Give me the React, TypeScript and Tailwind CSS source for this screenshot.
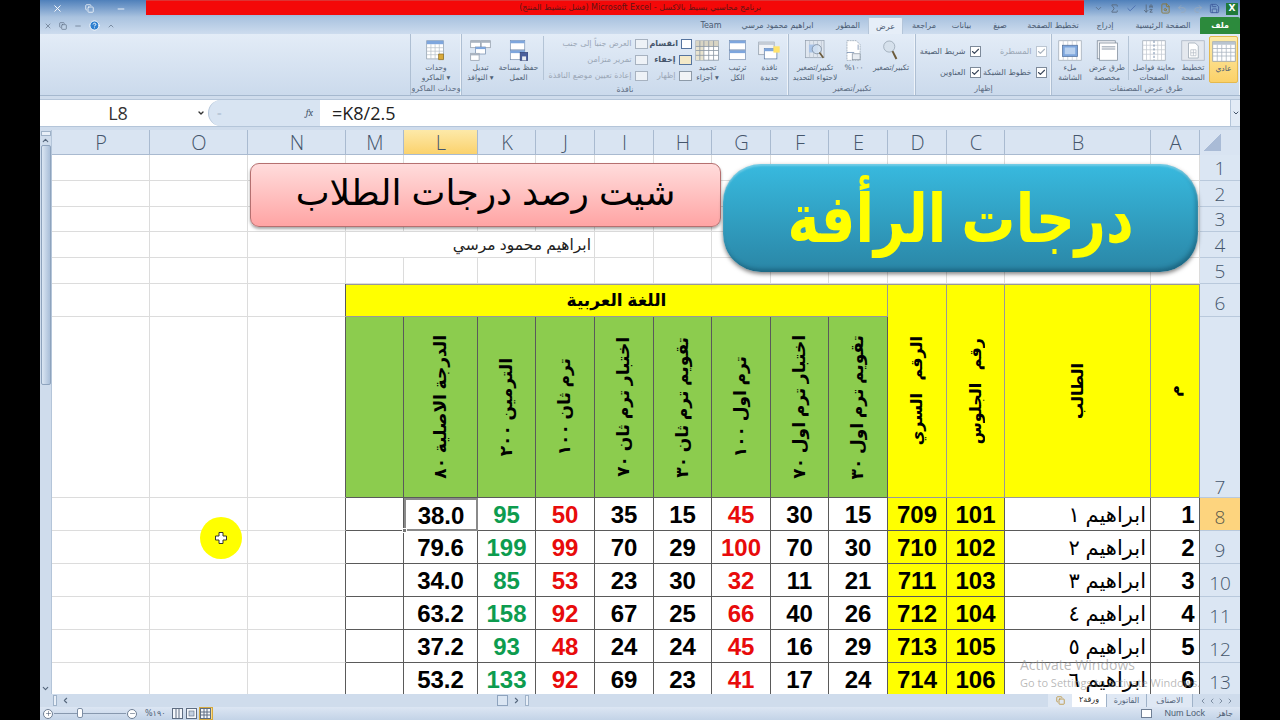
import React from 'react';
import { ArrowDownAZ, Check, ChevronDown, ChevronLeft, ChevronRight, ChevronUp, Minus, Plus, Sigma, Undo2, Redo2, Save, FileSearch, Copy, X, HelpCircle } from 'lucide-react';

const ui = "[font-family:'DejaVu_Sans',sans-serif]";

const SheetIcon = ({ fill = '#fff' }: { fill?: string }) => (
  <svg width={32} height={28} viewBox="0 0 32 28">
    <rect x="1" y="1" width="30" height="26" fill={fill} stroke="#8d9aa8" />
    <rect x="1" y="1" width="30" height="4" fill="#b9c4d0" />
    {[6, 12, 18, 24].map((x) => <path key={x} d={`M${x + 1} 5V27`} stroke="#a7b2be" />)}
    {[10, 15, 20].map((y) => <path key={y} d={`M1 ${y}H31`} stroke="#a7b2be" />)}
  </svg>
);

const PageIcon = () => (
  <svg width="32" height="28" viewBox="0 0 32 28">
    <rect x="1" y="1" width="30" height="26" fill="#e4e8ee" stroke="#a8b2bf" />
    <path d="M10 4h9l4 4v16H10z" fill="#fff" stroke="#9aa5b1" />
    <path d="M13 13h7v8h-7zM16.500 13v8M13 17h7" stroke="#b5bdc7" fill="none" />
  </svg>
);

const BreakIcon = () => (
  <svg width="32" height="28" viewBox="0 0 32 28">
    <rect x="1" y="1" width="30" height="26" fill="#fff" stroke="#a0aab5" />
    {[6, 11, 21, 26].map((x) => <path key={x} d={`M${x} 1V27`} stroke="#c3cad2" />)}
    {[7, 13, 19].map((y) => <path key={y} d={`M1 ${y}H31`} stroke="#c3cad2" />)}
    <path d="M16 1V27" stroke="#4e6b94" strokeDasharray="3 2" />
  </svg>
);

const CustomIcon = () => (
  <svg width="32" height="28" viewBox="0 0 32 28">
    <rect x="3" y="1" width="24" height="24" fill="#eef1f5" stroke="#7f8b99" />
    <rect x="6" y="4" width="24" height="23" fill="#fff" stroke="#7f8b99" />
    <path d="M9 9h18M9 12h18" stroke="#b4bcc6" strokeWidth="2" />
  </svg>
);

const FullIcon = () => (
  <svg width="32" height="28" viewBox="0 0 32 28">
    <rect x="1" y="1" width="30" height="26" fill="#fff" stroke="#a0aab5" />
    {[7, 13, 19, 25].map((x) => <path key={x} d={`M${x} 1V27`} stroke="#c3cad2" />)}
    <rect x="6" y="7" width="20" height="15" fill="#7ea6dd" stroke="#56749e" />
    <rect x="9" y="10" width="14" height="9" fill="#b9d1ef" />
  </svg>
);

const ZoomIcon = () => (
  <svg width="26" height="32" viewBox="0 0 26 32">
    <circle cx="11" cy="10" r="8.500" fill="#d6e1ec" stroke="#8b98a6" />
    <path d="M16 17l6 12" stroke="#6b5a3a" strokeWidth="3" />
  </svg>
);

const HundredIcon = () => (
  <svg width="26" height="32" viewBox="0 0 26 32">
    <path d="M3 1h14l6 6v24H3z" fill="#fff" stroke="#8d9aa8" strokeDasharray="3 1" />
    <rect x="11" y="21" width="12" height="9" fill="#e9edf2" stroke="#7f8b99" />
    <path d="M3 19h11M20 7v8" stroke="#56749e" />
  </svg>
);

const FitIcon = () => (
  <svg width="32" height="32" viewBox="0 0 32 32">
    <rect x="1" y="1" width="28" height="26" fill="#dfe6ef" stroke="#8d9aa8" />
    {[7, 13, 19, 25].map((x) => <path key={x} d={`M${x} 1V27`} stroke="#b4bec9" />)}
    <rect x="6" y="7" width="12" height="12" fill="#a9c3e6" />
    <circle cx="18" cy="14" r="7" fill="#d5e3f4" fillOpacity=".8" stroke="#6c7c8f" />
    <path d="M22 19l6 8" stroke="#6b5a3a" strokeWidth="2.500" />
  </svg>
);

const NewWinIcon = () => (
  <svg width="32" height="30" viewBox="0 0 32 30">
    <rect x="1" y="3" width="22" height="18" fill="#f1f3f6" stroke="#8a96a4" />
    <rect x="1" y="3" width="22" height="4" fill="#c4ccd6" />
    <rect x="9" y="12" width="18" height="15" fill="#fff" stroke="#56749e" />
    <rect x="9" y="12" width="18" height="4" fill="#7ea6dd" />
    <rect x="22" y="9" width="9" height="9" fill="#ffe36b" />
  </svg>
);

const ArrangeIcon = () => (
  <svg width="26" height="32" viewBox="0 0 26 32">
    <rect x="1" y="1" width="24" height="14" fill="#fff" stroke="#6f88aa" />
    <rect x="1" y="1" width="24" height="4" fill="#7ea6dd" />
    <rect x="1" y="16" width="24" height="14" fill="#fff" stroke="#6f88aa" />
    <rect x="1" y="16" width="24" height="4" fill="#7ea6dd" />
  </svg>
);

const FreezeIcon = () => (
  <svg width="30" height="26" viewBox="0 0 30 26">
    <rect x="1" y="1" width="28" height="24" fill="#fff" stroke="#8a96a4" />
    <rect x="1" y="1" width="10" height="24" fill="#e8e3cf" />
    <rect x="1" y="1" width="28" height="7" fill="#d9d5c4" />
    {[6, 11, 17, 23].map((x) => <path key={x} d={`M${x} 1V25`} stroke="#8a96a4" />)}
    {[8, 13, 19].map((y) => <path key={y} d={`M1 ${y}H29`} stroke="#8a96a4" />)}
  </svg>
);

const SaveAreaIcon = () => (
  <svg width="30" height="32" viewBox="0 0 30 32">
    <rect x="2" y="1" width="22" height="14" fill="#fff" stroke="#6f88aa" />
    <rect x="2" y="1" width="22" height="4" fill="#7ea6dd" />
    <rect x="2" y="16" width="22" height="14" fill="#fff" stroke="#6f88aa" />
    <rect x="2" y="16" width="22" height="4" fill="#7ea6dd" />
    <rect x="17" y="19" width="12" height="12" fill="#4a5f9c" stroke="#2f3f70" />
    <rect x="20" y="25" width="6" height="6" fill="#e9edf2" />
  </svg>
);

const SwitchIcon = () => (
  <svg width="30" height="30" viewBox="0 0 30 30">
    <rect x="1" y="1" width="14" height="10" fill="#fff" stroke="#8a96a4" />
    <rect x="1" y="1" width="14" height="3" fill="#aab4c0" />
    <rect x="16" y="1" width="13" height="10" fill="#fff" stroke="#8a96a4" />
    <rect x="16" y="1" width="13" height="3" fill="#aab4c0" />
    <rect x="8" y="10" width="14" height="10" fill="#fff" stroke="#6f88aa" />
    <rect x="8" y="10" width="14" height="3" fill="#7ea6dd" />
    <rect x="1" y="19" width="12" height="10" fill="#fff" stroke="#8a96a4" />
    <rect x="1" y="19" width="12" height="3" fill="#aab4c0" />
  </svg>
);

const MacroIcon = () => (
  <svg width="28" height="30" viewBox="0 0 28 30">
    <rect x="1" y="1" width="24" height="26" fill="#fff" stroke="#8d9aa8" />
    <rect x="1" y="1" width="24" height="5" fill="#7ea6dd" />
    {[7, 13, 19].map((x) => <path key={x} d={`M${x} 6V27`} stroke="#b4bec9" />)}
    {[11, 16, 21].map((y) => <path key={y} d={`M1 ${y}H25`} stroke="#b4bec9" />)}
    <path d="M18 20h7v8h-7z" fill="#d9a93a" stroke="#8a6b20" />
  </svg>
);

const ViewIcon = ({ kind }: { kind: 'layout' | 'page' | 'grid' }) => (
  <svg width="11" height="11" viewBox="0 0 11 11">
    <rect x=".5" y=".5" width="10" height="10" fill="#f4f7fb" stroke="#5e6d82" />
    {kind === 'layout' && <path d="M4 1v9M7 1v9" stroke="#5e6d82" />}
    {kind === 'page' && <rect x="3" y="3" width="5" height="5" fill="#c2cfdf" stroke="#5e6d82" strokeWidth=".6" />}
    {kind === 'grid' && <path d="M4 1v9M7 1v9M1 4h9M1 7h9" stroke="#5e6d82" />}
  </svg>
);

const Big = ({ w, lines, icon, active }: { w: number; lines: string[]; icon: React.ReactNode; active?: boolean }) => (
  <div
    style={{ width: w }}
    className={`flex h-[47px] shrink-0 flex-col items-center rounded-[2px] pt-[3px] ${active ? 'border border-[#e5b94d] bg-linear-to-b from-[#fdeba8] to-[#fbd168]' : ''}`}
  >
    <div className="flex h-[22px] items-center justify-center [&>svg]:h-[21px] [&>svg]:w-auto">{icon}</div>
    <div className="mt-[2px] text-center text-[7.5px] leading-[10px] whitespace-nowrap text-[#4f5f75]">
      {lines.map((l) => <div key={l}>{l}</div>)}
    </div>
  </div>
);

const Group = ({ w, label, children, gap = 'gap-1' }: { w: number; label: string; children: React.ReactNode; gap?: string }) => (
  <div style={{ width: w }} className="flex h-full shrink-0 flex-col border-l border-[#aebfd3] shadow-[inset_-1px_0_0_#eef3f9]">
    <div className={`flex h-[50px] justify-center pt-[2px] ${gap}`}>{children}</div>
    <div className="h-[12px] text-center text-[8px] leading-[11px] text-[#5d6d83]">{label}</div>
  </div>
);

const CheckRow = ({ label, dim }: { label: string; dim?: boolean }) => (
  <div className={`flex h-[21px] items-center justify-end gap-[4px] text-[8px] whitespace-nowrap ${dim ? 'text-[#9aa6b5]' : 'text-[#4f5f75]'}`}>
    <span>{label}</span>
    <span className={`flex h-[11px] w-[11px] shrink-0 items-center justify-center border bg-white ${dim ? 'border-[#bcc6d2]' : 'border-[#7d8a9a]'}`}>
      <Check size={9} strokeWidth={3} color={dim ? '#a9b3bf' : '#39465a'} />
    </span>
  </div>
);

const SmallRow = ({ label, dim, icon }: { label: string; dim?: boolean; icon: string }) => (
  <div className={`flex h-[16px] items-center justify-end gap-[3px] text-[8px] whitespace-nowrap ${dim ? 'text-[#9ba7b6]' : 'font-bold text-[#46566c]'}`}>
    <span>{label}</span>
    <span className={`h-[10px] w-[13px] border ${icon}`} />
  </div>
);

const tabs: [string, number][] = [
  ['Team', 32], ['ابراهيم محمود مرسي', 101], ['المطور', 40], ['عرض', 35], ['مراجعة', 42], ['بيانات', 33],
  ['صيغ', 44], ['تخطيط الصفحة', 62], ['إدراج', 42], ['الصفحة الرئيسية', 74],
];

const cols = ['P', 'O', 'N', 'M', 'L', 'K', 'J', 'I', 'H', 'G', 'F', 'E', 'D', 'C', 'B', 'A'];

const heads = [
  'الدرجة الاصلية ٨٠', 'الترمين ٢٠٠', 'ترم ثان ١٠٠', 'اختبار ترم ثان ٧٠',
  'تقويم ترم ثان ٣٠', 'ترم اول ١٠٠', 'اختبار ترم اول ٧٠', 'تقويم ترم اول ٣٠',
];

const rows = [
  ['38.0', '95', '50', '35', '15', '45', '30', '15', '709', '101', 'ابراهيم ١', '1', '8'],
  ['79.6', '199', '99', '70', '29', '100', '70', '30', '710', '102', 'ابراهيم ٢', '2', '9'],
  ['34.0', '85', '53', '23', '30', '32', '11', '21', '711', '103', 'ابراهيم ٣', '3', '10'],
  ['63.2', '158', '92', '67', '25', '66', '40', '26', '712', '104', 'ابراهيم ٤', '4', '11'],
  ['37.2', '93', '48', '24', '24', '45', '16', '29', '713', '105', 'ابراهيم ٥', '5', '12'],
  ['53.2', '133', '92', '69', '23', '41', '17', '24', '714', '106', 'ابراهيم ٦', '6', '13'],
];

const Blank = ({ className = '' }: { className?: string }) => <div className={`border-r border-b border-[#dcdcdc] ${className}`} />;

const RowNum = ({ n, on, className = 'items-center' }: { n: string; on?: boolean; className?: string }) => (
  <div className={`flex justify-center border-b border-[#b9c9dc] [font-family:'Open_Sans',sans-serif] text-[19px] leading-[20px] font-light ${on ? 'bg-[#fdd47e] text-[#5b5b4b]' : 'bg-[#dbe6f3] text-[#45566c]'} ${className}`}>
    {n}
  </div>
);

const line = 'border-r border-b border-[#5a5a5a]';

const numColor = (i: number) => {
  if (i === 1) return 'text-[#0d9c4f]';
  if (i === 2 || i === 5) return 'text-[#e80b0b]';
  return 'text-black';
};

const VertText = ({ t, size = 'text-[17px]' }: { t: string; size?: string }) => (
  <span dir="rtl" className={`rotate-180 font-bold whitespace-nowrap text-black [writing-mode:vertical-rl] ${size}`}>{t}</span>
);

export default function App() {
  return (
    <div className={`flex h-[720px] w-[1280px] justify-center overflow-hidden bg-black ${ui}`}>
      <div className="flex w-[1200px] flex-col bg-[#cfdcec]">
        {/* title bar + tabs */}
        <div className="h-[34px] bg-linear-to-b from-[#4f80ba] via-[#a9c2df] to-[#cddcee]">
          <div className="flex h-[17px]">
            <div className="flex w-[106px] items-center gap-[22px] pl-[12px] text-white">
              <X size={11} />
              <Copy size={9} />
              <Minus size={10} />
            </div>
            <div dir="rtl" className="flex h-[15px] w-[938px] items-center justify-center border-t border-[#d33] bg-[#f40808] pl-[50px] text-[8px] text-[#5e1414]">
              برنامج محاسبي بسيط بالاكسل - Microsoft Excel (فشل تنشيط المنتج)
            </div>
            <div className="flex flex-1 items-center justify-end gap-[6px] pr-[2px] text-[#5a6b80]">
              <ChevronDown size={9} />
              <Sigma size={11} />
              <Check size={11} color="#4a6fb0" />
              <ArrowDownAZ size={11} />
              <FileSearch size={11} color="#8a7a40" />
              <Undo2 size={10} color="#9ab" />
              <Redo2 size={10} color="#9ab" />
              <Save size={11} color="#3f5c9c" />
              <span className="flex h-[12px] w-[12px] items-center justify-center bg-[#1f7a3a] text-[9px] font-bold text-white">X</span>
            </div>
          </div>
          <div className="flex h-[17px] items-center">
            <div className="flex w-[80px] items-center gap-[7px] pl-[4px] text-[#5a6b80]">
              <X size={8} />
              <Copy size={8} />
              <Minus size={8} />
              <HelpCircle size={11} color="#fff" fill="#2f80d0" />
              <ChevronUp size={8} />
            </div>
            <div className="flex flex-1 justify-end">
              {tabs.map(([t, w]) => (
                <div
                  key={t}
                  style={{ width: w }}
                  className={`flex h-[17px] items-center justify-center pt-[1px] text-[8px] whitespace-nowrap text-[#4a5b72] ${t === 'عرض' ? 'rounded-t-[2px] border border-b-0 border-[#b4c5d9] bg-[#e6eef8]' : ''}`}
                >
                  {t}
                </div>
              ))}
              <div className="flex h-[17px] w-[40px] items-center justify-center rounded-t-[2px] bg-[#2c8a3c] text-[8px] font-bold text-white">ملف</div>
            </div>
          </div>
        </div>

        {/* ribbon */}
        <div className="flex h-[62px] justify-end border-b border-[#a5b8ce] bg-linear-to-b from-[#e3ecf7] to-[#cbdaec]">
          <Group w={51} label="وحدات الماكرو">
            <Big w={44} lines={['وحدات', 'الماكرو ▾']} icon={<MacroIcon />} />
          </Group>
          <Group w={327} label="نافذة" gap="gap-[2px]">
            <Big w={32} lines={['تبديل', 'النوافذ ▾']} icon={<SwitchIcon />} />
            <Big w={40} lines={['حفظ مساحة', 'العمل']} icon={<SaveAreaIcon />} />
            <div className="mx-[2px] h-[44px] w-px bg-[#b4c4d6]" />
            <div className="flex w-[100px] flex-col">
              <SmallRow dim label="العرض جنباً إلى جنب" icon="border-[#a7b2c0] bg-[#eef2f7]" />
              <SmallRow dim label="تمرير متزامن" icon="border-[#a7b2c0] bg-[#eef2f7]" />
              <SmallRow dim label="إعادة تعيين موضع النافذة" icon="border-[#a7b2c0] bg-[#eef2f7]" />
            </div>
            <div className="flex w-[42px] flex-col">
              <SmallRow label="انقسام" icon="border-[#56749e] bg-white" />
              <SmallRow label="إخفاء" icon="border-[#56749e] bg-[#f4e9c8]" />
              <SmallRow dim label="إظهار" icon="border-[#8d9aa8] bg-[#f1f3f6]" />
            </div>
            <Big w={28} lines={['تجميد', 'أجزاء ▾']} icon={<FreezeIcon />} />
            <Big w={28} lines={['ترتيب', 'الكل']} icon={<ArrangeIcon />} />
            <Big w={32} lines={['نافذة', 'جديدة']} icon={<NewWinIcon />} />
          </Group>
          <Group w={127} label="تكبير/تصغير" gap="gap-[4px]">
            <Big w={46} lines={['تكبير/تصغير', 'لاحتواء التحديد']} icon={<FitIcon />} />
            <Big w={24} lines={['%١٠٠']} icon={<HundredIcon />} />
            <Big w={42} lines={['تكبير/تصغير']} icon={<ZoomIcon />} />
          </Group>
          <Group w={136} label="إظهار">
            <div className="grid w-[126px] grid-cols-[60px_66px] pt-[5px]">
              <CheckRow label="شريط الصيغة" />
              <CheckRow dim label="المسطرة" />
              <CheckRow label="العناوين" />
              <CheckRow label="خطوط الشبكة" />
            </div>
          </Group>
          <Group w={189} label="طرق عرض المصنفات" gap="gap-[2px]">
            <Big w={32} lines={['ملء', 'الشاشة']} icon={<FullIcon />} />
            <Big w={38} lines={['طرق عرض', 'مخصصة']} icon={<CustomIcon />} />
            <div className="h-[44px] w-px bg-[#b4c4d6]" />
            <Big w={46} lines={['معاينة فواصل', 'الصفحات']} icon={<BreakIcon />} />
            <Big w={28} lines={['تخطيط', 'الصفحة']} icon={<PageIcon />} />
            <Big active w={29} lines={['عادي']} icon={<SheetIcon />} />
          </Group>
        </div>

        {/* formula bar */}
        <div className="mt-[3px] flex h-[28px] border-y border-[#b4c5d9] bg-white [font-family:'Open_Sans',sans-serif]">
          <div className="relative flex w-[168px] items-center justify-center pr-[12px] text-[18px] text-[#333]">
            L8
            <ChevronDown size={8} className="absolute right-[3px] top-[9px] text-[#333]" strokeWidth={4} />
          </div>
          <div className="flex w-[112px] items-center justify-between rounded-l-[14px] border-l border-[#b4c5d9] bg-[#d8e4f2] pr-[7px] pl-[8px]">
            <span className="text-[8px] text-[#a6b6c9]">=</span>
            <span className="font-serif text-[10px] text-[#44546a] italic">fx</span>
          </div>
          <div className="flex-1 pl-[12px] text-[18px] leading-[26px] text-[#222]">=K8/2.5</div>
          <div className="flex w-[10px] items-center justify-center border-l border-[#b4c5d9] bg-[#e2ebf6]">
            <ChevronDown size={8} className="text-[#44546a]" strokeWidth={3} />
          </div>
        </div>

        {/* sheet */}
        <div className="mt-[3px] flex h-[564px]">
          <div className="flex w-[12px] shrink-0 flex-col items-center border-r border-[#b4c5d9] bg-[#cfdcec]">
            <div className="mt-[1px] h-[5px] w-[10px] border border-[#9fb2c8] bg-[#e8eff8]" />
            <ChevronUp size={9} strokeWidth={3} className="text-[#55667c]" />
            <div className="h-[240px] w-[10px] rounded-[2px] border border-[#8ea3bd] bg-linear-to-r from-[#dbe6f3] to-[#a9bed8]" />
            <div className="flex-1" />
            <ChevronDown size={9} strokeWidth={3} className="mb-[1px] text-[#55667c]" />
          </div>
          <div className="relative flex-1 overflow-hidden bg-white [font-family:'Liberation_Sans','DejaVu_Sans',sans-serif]">
            <div className="grid grid-cols-[98px_98px_98px_58px_74px_58px_59px_59px_58px_59px_58px_59px_59px_58px_146px_49px_40px] grid-rows-[25px_26px_26px_25px_26px_26px_33px_181px_33px_33px_33px_33px_33px_33px]">
              {/* column headings */}
              {cols.map((c) => (
                <div
                  key={c}
                  className={`flex items-center justify-center border-r border-b border-[#a9bad0] pt-[2px] pl-[1px] [font-family:'Open_Sans',sans-serif] text-[20px] leading-[20px] font-light text-[#45566c] ${c === 'L' ? 'bg-linear-to-b from-[#fde9a8] to-[#fbd26c]' : 'bg-[#d9e4f2]'}`}
                >
                  {c}
                </div>
              ))}
              <div className="bg-[#d9e4f2] p-[3px]">
                <div className="h-[18px] w-[18px] bg-linear-to-br from-[#d9e4f2] from-50% to-[#a9bbd6] to-50%" />
              </div>

              {/* rows 1-5 */}
              {['1', '2', '3', '4', '5'].map((n) =>
                n === '4' ? (
                  <React.Fragment key={n}>
                    <Blank /><Blank /><Blank />
                    <div dir="rtl" className="col-span-4 flex items-center border-r border-b border-[#dcdcdc] pt-[1px] pr-[3px] text-[15.5px] text-[#222]">ابراهيم محمود مرسي</div>
                    {Array.from({ length: 9 }, (_, i) => <Blank key={i} />)}
                    <RowNum n={n} />
                  </React.Fragment>
                ) : (
                  <React.Fragment key={n}>
                    {cols.map((c) => <Blank key={c} />)}
                    <RowNum n={n} />
                  </React.Fragment>
                ),
              )}

              {/* row 6 */}
              <Blank /><Blank /><Blank className="border-r-[#5a5a5a]" />
              <div className={`col-span-9 flex items-center justify-center border-t border-[#999] bg-[#ffff00] text-[17px] font-bold ${line}`}>اللغة العربية</div>
              {['الرقم السري', 'رقم الجلوس', 'الطالب', 'م'].map((t) => (
                <div key={t} className={`row-span-2 flex items-center justify-center border-t border-[#999] bg-[#ffff00] ${line}`}>
                  <VertText t={t} size="text-[16px] [word-spacing:8px]" />
                </div>
              ))}
              <RowNum n="6" className="items-center pt-[5px]" />

              {/* row 7 */}
              <Blank /><Blank /><Blank className="border-r-[#5a5a5a]" />
              <div className={`bg-[#8ccc4e] ${line}`} />
              {heads.map((t) => (
                <div key={t} className={`flex items-center justify-center bg-[#8ccc4e] ${line}`}>
                  <VertText t={t} />
                </div>
              ))}
              <RowNum n="7" className="items-end" />

              {/* data rows */}
              {rows.map((r) => (
                <React.Fragment key={r[12]}>
                  <Blank /><Blank /><Blank className="border-r-[#5a5a5a]" />
                  <div className={line} />
                  {r.slice(0, 8).map((v, i) => (
                    <div
                      key={i}
                      className={`relative flex items-center justify-center pt-[2px] text-[24px] font-bold ${numColor(i)} ${r[12] === '8' && i === 0 ? 'border-2 border-[#8a8a8a]' : line}`}
                    >
                      {v}
                      {r[12] === '8' && i === 0 && <span className="absolute -bottom-[4px] -left-[4px] h-[5px] w-[5px] border border-white bg-[#777]" />}
                    </div>
                  ))}
                  <div className={`flex items-center justify-center bg-[#ffff00] pt-[2px] text-[24px] font-bold ${line}`}>{r[8]}</div>
                  <div className={`flex items-center justify-center bg-[#ffff00] pt-[2px] text-[24px] font-bold ${line}`}>{r[9]}</div>
                  <div dir="rtl" className={`flex items-center pt-[1px] pr-[4px] text-[21px] text-black ${line}`}>{r[10]}</div>
                  <div className={`flex items-center justify-end pt-[2px] pr-[4px] pl-[4px] text-[24px] font-bold ${line}`}>
                    <span className="mx-auto pl-[26px]">{r[11]}</span>
                  </div>
                  <RowNum n={r[12]} on={r[12] === '8'} className="items-center pt-[5px]" />
                </React.Fragment>
              ))}
            </div>

            {/* floating shapes */}
            <div dir="rtl" className="absolute top-[33px] left-[198px] flex h-[64px] w-[471px] items-center justify-center rounded-[9px] border border-[#b57070] bg-linear-to-b from-[#ffdcdc] to-[#ffa4a4] pb-[5px] text-[36px] text-black shadow-[0_2px_3px_rgba(0,0,0,0.35)]">
              شيت رصد درجات الطلاب
            </div>
            <div dir="rtl" className="absolute top-[34px] left-[671px] flex h-[108px] w-[475px] items-center justify-center rounded-[38px] bg-linear-to-b from-[#38badf] to-[#2a86a6] text-[54px] font-bold text-[#ffff00] shadow-[0_2px_4px_rgba(0,0,0,0.5),inset_0_2px_2px_rgba(255,255,255,0.3),inset_-2px_-3px_4px_rgba(0,40,60,0.35)]">
              <span className="inline-block scale-y-[1.25]">درجات الرأفة</span>
            </div>
            <div className="absolute top-[387px] left-[148px] flex h-[42px] w-[42px] items-center justify-center rounded-full bg-[#ffff00]">
              <svg width="12" height="12" viewBox="0 0 12 12">
                <path d="M4 .5h4V4h3.500v4H8v3.500H4V8H.5V4H4z" fill="#fff" stroke="#333" />
              </svg>
            </div>
            <div className="absolute top-[526px] left-[968px] text-[14px] leading-[18px] text-[#8a8a8a]/60 [font-family:'Open_Sans',sans-serif]">
              <div>Activate Windows</div>
              <div className="text-[11px]">Go to Settings to activate Windows.</div>
            </div>
          </div>
        </div>

        {/* scroll bar + sheet tabs */}
        <div className="flex h-[13px] items-center bg-[#cfdcec] text-[#55667c]">
          <div className="flex w-[489px] items-center gap-[4px] pl-[13px]">
            <span className="h-[11px] w-[4px] border border-[#9fb2c8] bg-[#e8eff8]" />
            <ChevronLeft size={9} strokeWidth={3} />
            <span className="flex-1" />
            <span className="h-[11px] w-[11px] border border-[#8ea3bd] bg-[#dbe6f3]" />
            <ChevronRight size={9} strokeWidth={3} />
            <span className="h-[11px] w-[4px] border border-[#9fb2c8] bg-[#e8eff8]" />
          </div>
          <div className="flex-1" />
          <div className="flex h-full items-center text-[8px] text-[#55667c]">
            <div className="flex h-full w-[24px] items-center justify-center bg-[#dfe8f4]">
              <Copy size={9} className="text-[#b58a2a]" />
            </div>
            <div className="flex h-[14px] w-[34px] items-center justify-center border-b border-[#55667c] bg-white text-[#222]">ورقة٢</div>
            <div className="flex h-full w-[41px] items-center justify-center border-x border-[#9fb2c8] bg-[#dfe8f4]">الفاتورة</div>
            <div className="flex h-full w-[46px] items-center justify-center border-r border-[#9fb2c8] bg-[#dfe8f4]">الاصناف</div>
            <div className="flex h-full w-[47px] items-center justify-center gap-[1px]">
              <ChevronLeft size={8} /><ChevronLeft size={8} /><ChevronRight size={8} /><ChevronRight size={8} />
            </div>
          </div>
        </div>

        {/* status bar */}
        <div className="flex h-[13px] items-center justify-between bg-linear-to-b from-[#dce6f3] to-[#c3d3e7] text-[8px] text-[#4d5d73]">
          <div className="flex items-center pl-[3px]">
            <span className="flex h-[10px] w-[10px] items-center justify-center rounded-full border border-[#6f7f95] bg-white"><Plus size={7} /></span>
            <span className="relative mx-[1px] h-px w-[72px] bg-[#8798ae]">
              <span className="absolute top-[-5px] left-[23px] h-[10px] w-[6px] rounded-[2px] border border-[#7d8ea5] bg-white" />
            </span>
            <span className="flex h-[10px] w-[10px] items-center justify-center rounded-full border border-[#6f7f95] bg-white"><Minus size={7} /></span>
            <span className="mr-[6px] ml-[8px]">%١٩٠</span>
            <span className="mr-[3px] flex"><ViewIcon kind="layout" /></span>
            <span className="mr-[2px] flex"><ViewIcon kind="page" /></span>
            <span className="flex h-[13px] w-[14px] items-center justify-center border border-[#d6a93f] bg-[#fbdc84]"><ViewIcon kind="grid" /></span>
          </div>
          <div className="flex items-center gap-[12px] pr-[7px]">
            <span className="h-[9px] w-[11px] border border-[#6f7f95] bg-white" />
            <span className="[font-family:'Liberation_Sans',sans-serif] text-[9px]">Num Lock</span>
            <span>جاهز</span>
          </div>
        </div>
      </div>
    </div>
  );
}
